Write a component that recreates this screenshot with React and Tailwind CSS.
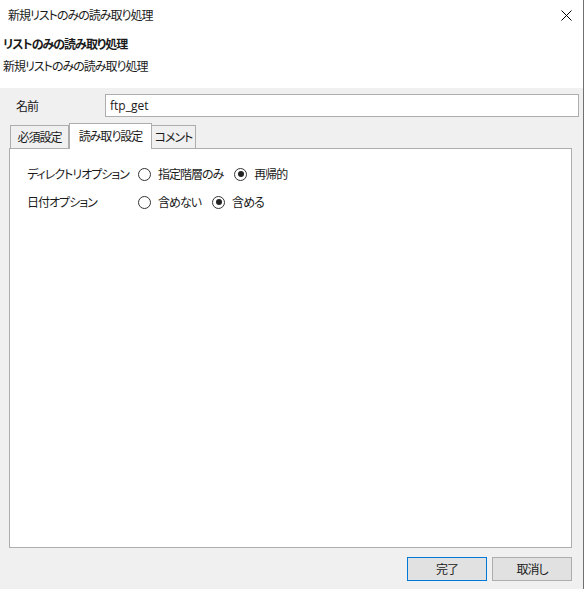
import React from 'react'

const font = { fontFamily: '"Noto Sans CJK JP", "Noto Sans", sans-serif' }

// ─── Radio ────────────────────────────────────────────────────────────────────
function Radio({ checked, label }) {
  return (
    <div className="flex items-center gap-[7px]">
      <span className="w-[13px] h-[13px] rounded-full border border-[#333] bg-white flex items-center justify-center">
        {checked && <span className="w-[6px] h-[6px] rounded-full bg-[#222]" />}
      </span>
      <span>{label}</span>
    </div>
  )
}

function OptionRow({ label, options }) {
  return (
    <div className="flex items-center h-[28px]">
      <div className="w-[111px] shrink-0">{label}</div>
      <div className="flex items-center gap-[11px]">
        {options.map((o) => (
          <Radio key={o.label} {...o} />
        ))}
      </div>
    </div>
  )
}

export default function App() {
  return (
    <div
      className="w-[584px] h-[589px] flex flex-col bg-[#f0f0f0] border-r border-[#707070] text-[12px] tracking-[-1px] text-[#1a1a1a] overflow-hidden [font-feature-settings:'palt'] whitespace-nowrap"
      style={font}
    >
      {/* title bar */}
      <div className="h-[30px] bg-white flex items-center justify-between pl-[8px] pr-[11px] shrink-0">
        <span>新規リストのみの読み取り処理</span>
        <svg width="11" height="11" viewBox="0 0 11 11" className="text-black">
          <path d="M0.5 0.5 L10.5 10.5 M10.5 0.5 L0.5 10.5" stroke="currentColor" strokeWidth="1" />
        </svg>
      </div>

      {/* header */}
      <div className="h-[58px] bg-white pl-[3px] pt-[5px] shrink-0 flex flex-col gap-[4px]">
        <div className="font-bold leading-[18px]">リストのみの読み取り処理</div>
        <div className="leading-[18px]">新規リストのみの読み取り処理</div>
      </div>

      {/* body */}
      <div className="flex-1 flex flex-col px-[9px] pt-[6px] pb-[8px]">
        <div className="flex items-center h-[23px]">
          <span className="w-[96px] pl-[7px]">名前</span>
          <div className="flex-1 h-[23px] bg-white border border-[#adadad] flex items-center px-[4px] mr-[-5px] text-[12px] tracking-normal" style={{ fontFamily: '"Open Sans", "Noto Sans", sans-serif' }}>
            ftp_get
          </div>
        </div>

        {/* tabs */}
        <div className="flex items-end h-[28px] mt-[3px] pl-[1px]">
          <div className="w-[59px] h-[23px] flex items-center justify-center border border-b-0 border-[#adadad] bg-[#f0f0f0]">必須設定</div>
          <div className="w-[83px] h-[26px] flex items-start justify-center pt-[3px] border border-b-0 border-[#adadad] bg-white relative -mb-px z-10">読み取り設定</div>
          <div className="w-[44px] h-[23px] flex items-center justify-center border border-b-0 border-l-0 border-[#adadad] bg-[#f0f0f0]">コメント</div>
        </div>

        {/* panel */}
        <div className="flex-1 bg-white border border-[#adadad] pl-[17px] pt-[11px] mr-[2px]">
          <OptionRow
            label="ディレクトリオプション"
            options={[{ label: '指定階層のみ' }, { label: '再帰的', checked: true }]}
          />
          <OptionRow
            label="日付オプション"
            options={[{ label: '含めない' }, { label: '含める', checked: true }]}
          />
        </div>

        {/* buttons */}
        <div className="flex justify-end gap-[5px] mt-[9px] mr-[2px]">
          <button className="w-[80px] h-[24px] bg-[#e1e1e1] border border-[#0078d7] flex items-center justify-center">完了</button>
          <button className="w-[80px] h-[24px] bg-[#e1e1e1] border border-[#adadad] flex items-center justify-center">取消し</button>
        </div>
      </div>
    </div>
  )
}
